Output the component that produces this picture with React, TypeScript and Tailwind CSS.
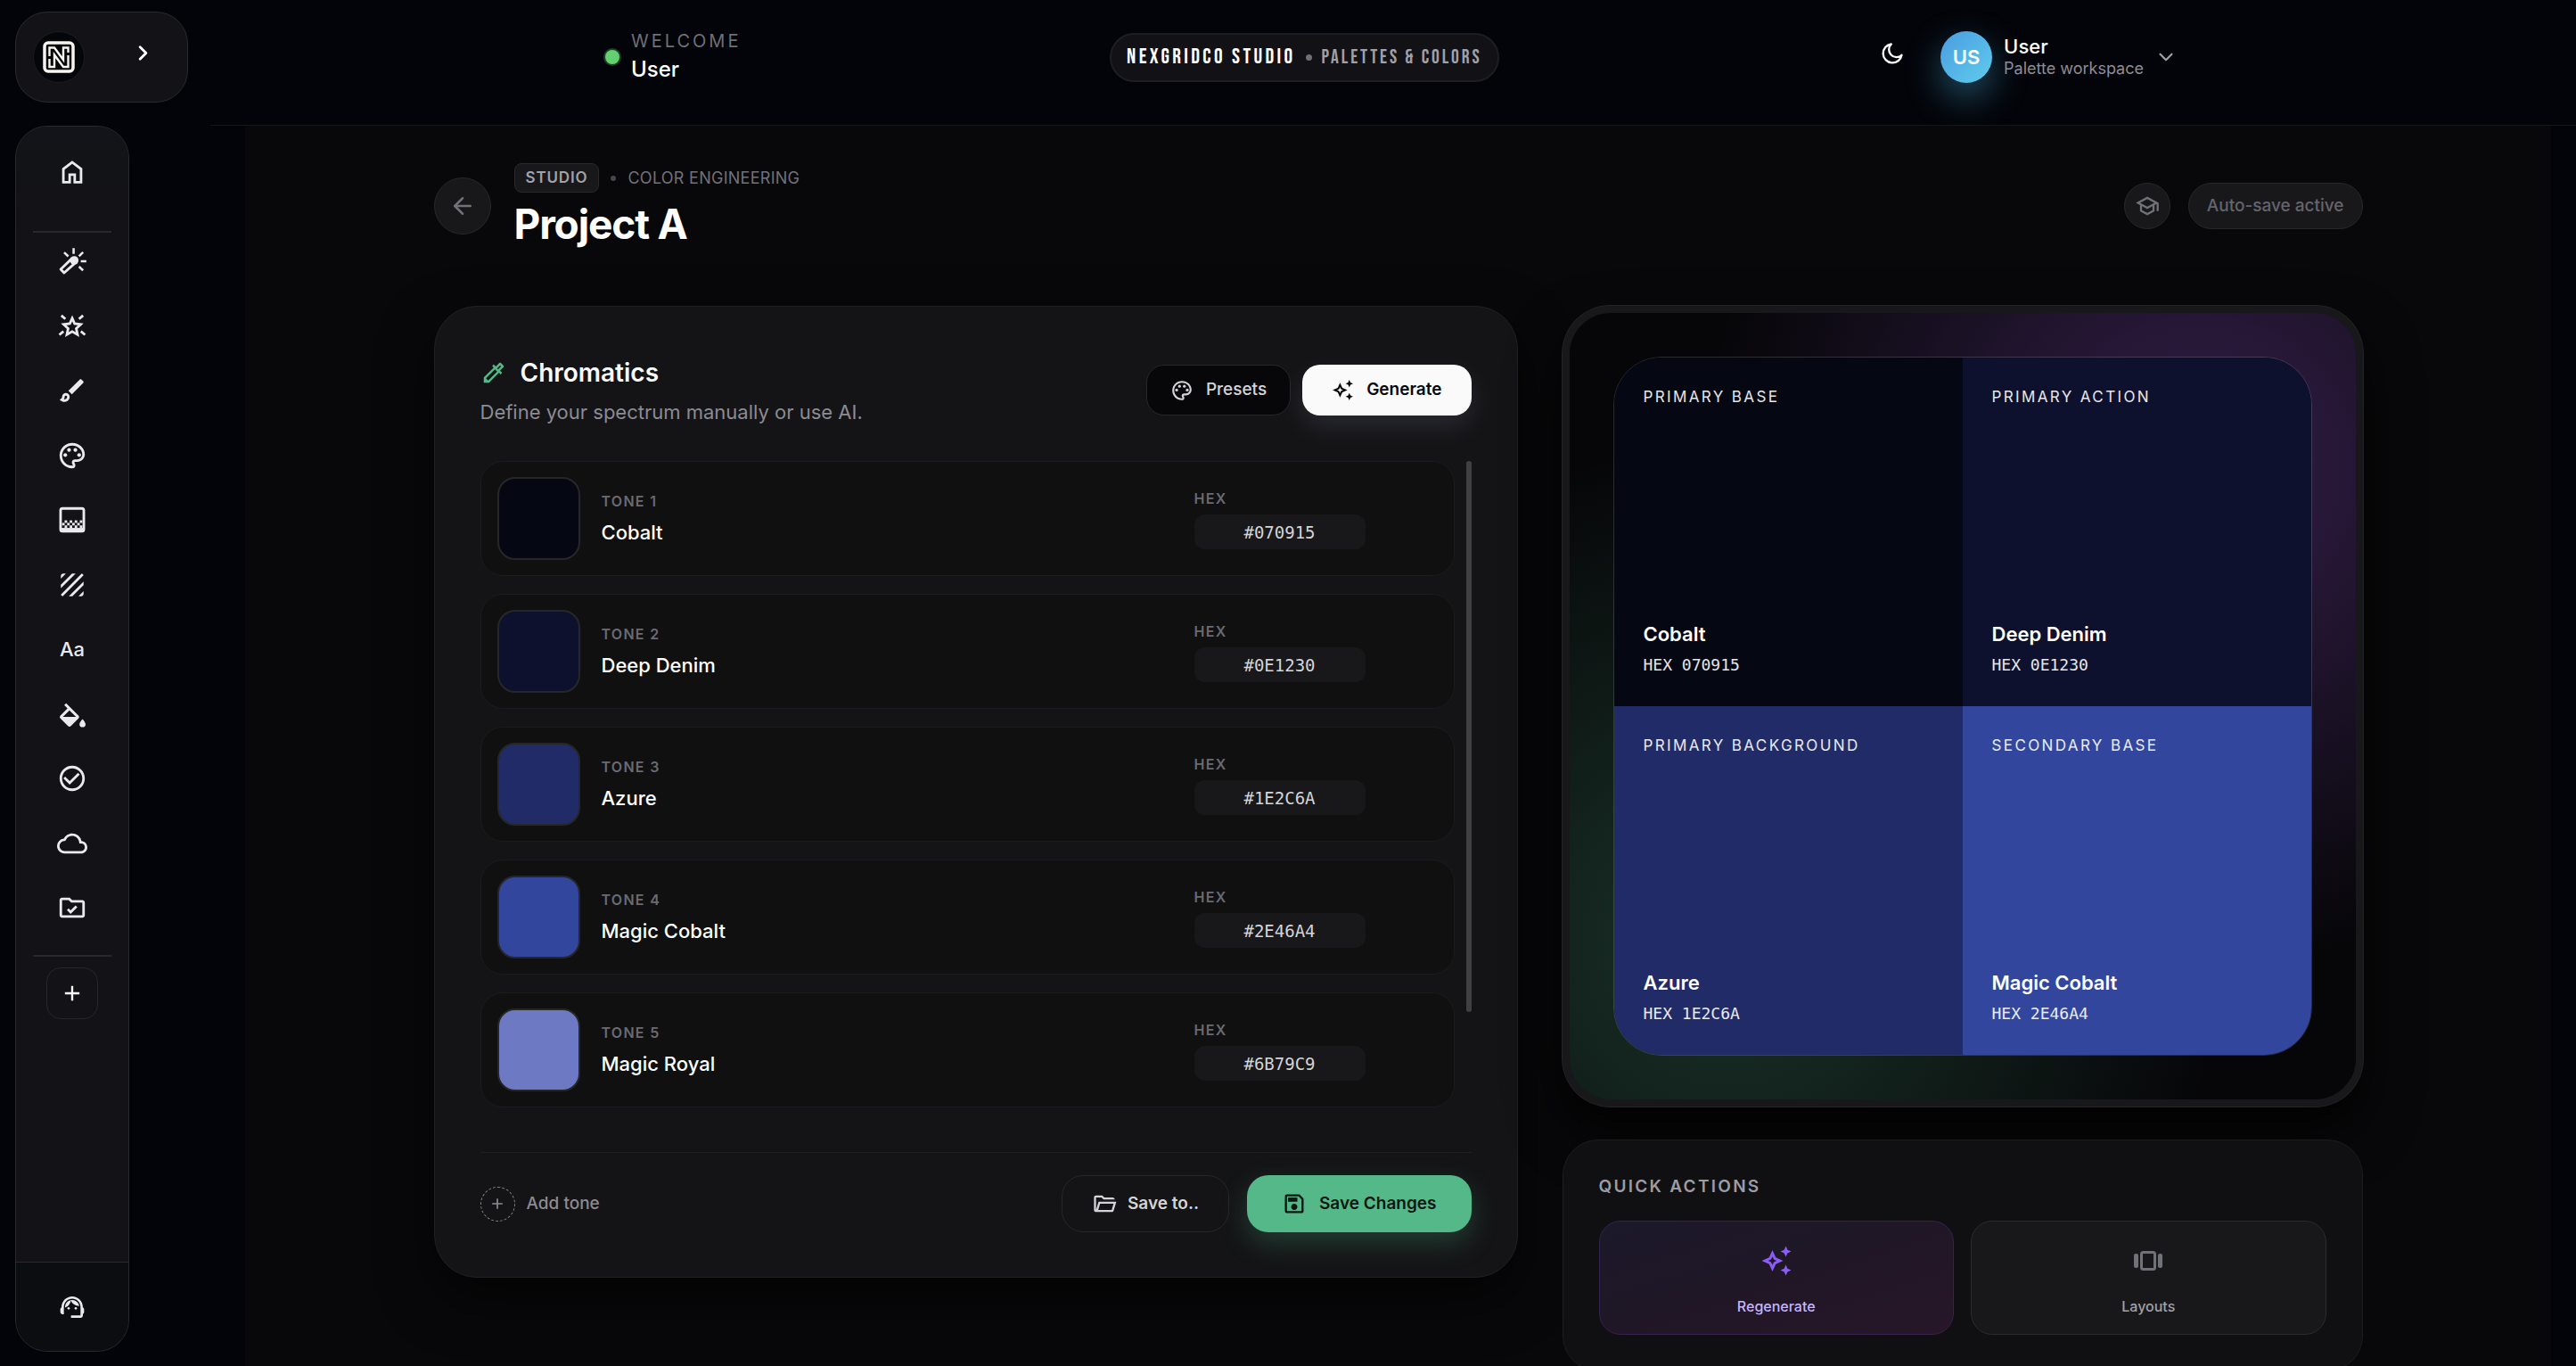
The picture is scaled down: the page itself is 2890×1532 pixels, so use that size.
import React from 'react';
import { ArrowLeft, ChevronDown, ChevronRight } from 'lucide-react';
import {
  MdAdd,
  MdCheckCircleOutline,
  MdOutlineAutoAwesome,
  MdOutlineBrush,
  MdOutlineCloud,
  MdOutlineColorize,
  MdOutlinePalette,
  MdOutlineSave,
  MdOutlineSchool,
  MdOutlineSupportAgent,
  MdTexture,
} from 'react-icons/md';

type Tone = { name: string; hex: string; swatch: string };

const tones: Tone[] = [
  { name: 'Cobalt', hex: '070915', swatch: 'bg-[#050712]' },
  { name: 'Deep Denim', hex: '0E1230', swatch: 'bg-[#0e112d]' },
  { name: 'Azure', hex: '1E2C6A', swatch: 'bg-[#212b67]' },
  { name: 'Magic Cobalt', hex: '2E46A4', swatch: 'bg-[#32469d]' },
  { name: 'Magic Royal', hex: '6B79C9', swatch: 'bg-[#6e79c4]' },
];

const roles = ['Primary Base', 'Primary Action', 'Primary Background', 'Secondary Base'];

const HomeIcon = () => (
  <svg viewBox="0 -960 960 960" fill="currentColor" className="size-[34px]">
    <path d="M240-200h120v-240h240v240h120v-360L480-740 240-560v360Zm-80 80v-480l320-240 320 240v480H520v-240h-80v240H160Z" />
  </svg>
);

const WandIcon = () => (
  <svg viewBox="0 0 24 24" fill="none" stroke="currentColor" strokeWidth="2" className="size-[34px]">
    <path d="M11.8 9.8 2.9 18.3 5.6 21.2 15 12.8" strokeLinejoin="round" />
    <circle cx="13.6" cy="11.3" r="3.4" fill="currentColor" stroke="none" />
    <path d="M13.1 1.6v4.6M18.8 12h4.4M17.4 8 20.6 4.9M5.6 5l3.3 3.1M17.4 16.2l3.2 3" strokeWidth="1.8" />
  </svg>
);

const StarIcon = () => (
  <svg viewBox="0 0 24 24" fill="none" stroke="currentColor" strokeWidth="2" className="size-[34px]">
    <path d="m12 5.6 1.9 4.3 4.8.6-3.5 3.2 1 4.8-4.2-2.4-4.2 2.4 1-4.8-3.5-3.2 4.8-.6z" />
    <path d="M3.4 3.4l3.2 2.8M20.6 3.4l-3.2 2.8M1.8 18.7l3.3-2.7M22.2 18.7l-3.3-2.7" />
  </svg>
);

const GradientIcon = () => (
  <svg viewBox="0 0 24 24" fill="currentColor" className="size-[34px]">
    <rect x="2.8" y="3" width="18.4" height="18" rx="1.5" fill="none" stroke="currentColor" strokeWidth="2" />
    {[0, 1, 2].map((row) =>
      [0, 1, 2, 3].map((col) => (
        <rect key={`${row}-${col}`} x={4 + col * 4 + (row % 2 === 0 ? 2 : 0)} y={12.4 + row * 2} width="2" height="2" />
      ))
    )}
    <path d="M3 18.4h18v2.6H3z" />
  </svg>
);

const FillIcon = () => (
  <svg viewBox="1 -3 22 22" fill="currentColor" className="size-[34px]">
    <path d="M16.56 8.94 7.62 0 6.21 1.41l2.38 2.38-5.15 5.15a1.49 1.49 0 0 0 0 2.12l5.5 5.5c.29.29.68.44 1.06.44s.77-.15 1.06-.44l5.5-5.5c.59-.58.59-1.53 0-2.12zM5.21 10 10 5.21 14.79 10z" />
    <path d="M19.5 11.5s-2.2 2.3-2.2 3.7a2.2 2.2 0 0 0 4.4 0c0-1.4-2.2-3.7-2.2-3.7z" />
  </svg>
);

const FolderCheckIcon = () => (
  <svg viewBox="0 -960 960 960" fill="currentColor" className="size-[34px]">
    <path d="M160-160q-33 0-56.5-23.5T80-240v-480q0-33 23.5-56.5T160-800h240l80 80h320q33 0 56.5 23.5T880-640v400q0 33-23.5 56.5T800-160H160Zm0-80h640v-400H447l-80-80H160v480Z" />
    <path d="m340-430 90 90 185-185" fill="none" stroke="currentColor" strokeWidth="80" />
  </svg>
);

const FolderOpenIcon = () => (
  <svg viewBox="0 -960 960 960" fill="currentColor" className="size-[28px]">
    <path d="M160-160q-33 0-56.5-23.5T80-240v-480q0-33 23.5-56.5T160-800h240l80 80h320q33 0 56.5 23.5T880-640H447l-80-80H160v480l96-320h684L837-217q-8 26-29.5 41.5T760-160H160Zm84-80h516l72-240H316l-72 240Z" />
  </svg>
);

const CarouselIcon = () => (
  <svg viewBox="0 0 36 36" fill="currentColor" className="size-9 text-[#71717a]">
    <rect x="10.5" y="8.5" width="15" height="19" rx="2" fill="none" stroke="currentColor" strokeWidth="3" />
    <rect x="2" y="10" width="5" height="16" rx="2" />
    <rect x="29" y="10" width="5" height="16" rx="2" />
  </svg>
);

const MoonIcon = () => (
  <svg viewBox="0 0 24 24" fill="none" stroke="currentColor" strokeWidth="2" strokeLinejoin="round" className="size-7">
    <path d="M11 3a9 9 0 1 0 10 10.5A6.5 6.5 0 0 1 11 3z" />
  </svg>
);

const LogoMark = () => (
  <svg viewBox="0 0 36 36" fill="none" className="size-9">
    <rect x="2" y="2" width="32" height="32" rx="4" stroke="#f7f5ee" strokeWidth="3.5" />
    <path
      d="M7.5 17V7.5H13L23 21V7.5h5.5V13M28.5 16v13H23L13 15.5V29H7.5v-9"
      stroke="#f7f5ee"
      strokeWidth="2.4"
    />
  </svg>
);

const navItems: { label: string; icon: React.ReactNode }[] = [
  { label: 'Magic', icon: <WandIcon /> },
  { label: 'Logos', icon: <StarIcon /> },
  { label: 'Brush', icon: <MdOutlineBrush size={34} /> },
  { label: 'Palettes', icon: <MdOutlinePalette size={34} /> },
  { label: 'Gradients', icon: <GradientIcon /> },
  { label: 'Textures', icon: <MdTexture size={34} /> },
  { label: 'Typography', icon: <span className="block text-[22px] leading-[34px] font-medium">Aa</span> },
  { label: 'Fill', icon: <FillIcon /> },
  { label: 'Checks', icon: <MdCheckCircleOutline size={34} /> },
  { label: 'Cloud', icon: <MdOutlineCloud size={34} /> },
  { label: 'Projects', icon: <FolderCheckIcon /> },
];

const Sidebar = () => (
  <aside className="flex w-[236px] shrink-0 flex-col items-start gap-[26px] pt-[13px] pb-4 pl-[17px]">
    <div className="flex h-[102px] w-[194px] shrink-0 items-center justify-between rounded-[36px] border border-[#2a2a2e] bg-[#131217] pr-9 pl-[19px]">
      <a href="#" aria-label="Nexgridco" className="flex size-[58px] items-center justify-center rounded-full border border-[#1c1c20] bg-[#04060a]">
        <LogoMark />
      </a>
      <button aria-label="Expand sidebar" className="mb-[10px] text-white">
        <ChevronRight size={27} strokeWidth={2.5} />
      </button>
    </div>

    <div className="flex w-32 flex-1 flex-col overflow-hidden rounded-[36px] border border-[#2a2a2e] bg-[#131217] text-[#e9e9ee]">
      <div className="flex h-[117px] shrink-0 items-start justify-center bg-gradient-to-b from-[#111418] to-[#131217] pt-[34px]">
        <a href="#" aria-label="Home">
          <HomeIcon />
        </a>
      </div>
      <div className="mx-[19px] h-0.5 shrink-0 bg-[#29292d]" />
      <nav className="flex h-[798px] shrink-0 flex-col items-center justify-between pt-[15px] pb-6">
        {navItems.map((item) => (
          <a key={item.label} href="#" aria-label={item.label}>
            {item.icon}
          </a>
        ))}
      </nav>
      <div className="mx-[19px] mt-3 h-0.5 shrink-0 bg-[#29292d]" />
      <button aria-label="Add" className="mt-3 flex size-[58px] shrink-0 items-center justify-center self-center rounded-2xl border border-[#27272b] text-white">
        <MdAdd size={28} />
      </button>
      <div className="mt-auto flex h-[100px] shrink-0 items-center justify-center border-t border-[#2a2a2e] bg-[#0c0d11]">
        <a href="#" aria-label="Support">
          <MdOutlineSupportAgent size={32} />
        </a>
      </div>
    </div>
  </aside>
);

const Header = () => (
  <header className="flex h-[141px] shrink-0 items-start justify-center border-b border-[#151619] pt-[13px] pl-3">
    <div className="flex h-[102px] w-[1840px] items-center justify-between rounded-[40px] pr-[46px] pl-[30px]">
      <div className="flex items-center gap-[13px]">
        <span className="size-4 rounded-full bg-[#64cf72] ring-2 ring-[#1c3f24]" />
        <div>
          <p className="text-[20px] leading-7 tracking-[0.15em] text-[#6f6f76] uppercase">Welcome</p>
          <p className="text-[24px] leading-9 font-medium text-white">User</p>
        </div>
      </div>

      <div className="flex h-[55px] items-center gap-[11px] rounded-full border-2 border-[#1e1e22] bg-[#121116] px-[17px] font-['Bebas_Neue','Roboto_Condensed',Roboto,sans-serif] uppercase">
        <span className="text-[24px] tracking-[0.14em] text-white">Nexgridco Studio</span>
        <span className="size-[7px] rounded-full bg-[#6f6f76]" />
        <span className="text-[22px] tracking-[0.13em] text-[#a0a0a8]">Palettes &amp; Colors</span>
      </div>

      <div className="flex items-center gap-[26px]">
        <button aria-label="Toggle theme" className="mb-2 flex size-14 items-center justify-center text-white">
          <MoonIcon />
        </button>
        <button className="flex items-center text-left">
          <span className="flex size-[58px] items-center justify-center rounded-full bg-gradient-to-br from-[#4c9be0] to-[#5fcdec] text-[22px] font-semibold text-white shadow-[0_16px_40px_rgba(76,175,225,0.45)]">
            US
          </span>
          <span className="ml-[13px] flex flex-col">
            <span className="text-[22px] leading-[26px] font-medium text-white">User</span>
            <span className="text-[18px] leading-6 text-[#8d8d95]">Palette workspace</span>
          </span>
          <ChevronDown size={26} className="ml-3 text-[#a0a0a8]" />
        </button>
      </div>
    </div>
  </header>
);

const PageTitle = () => (
  <div className="flex items-center justify-between">
    <div className="flex items-center gap-[26px]">
      <button aria-label="Back" className="flex size-16 items-center justify-center rounded-full border border-[#28282b] bg-[#18181b] text-[#71717a]">
        <ArrowLeft size={30} />
      </button>
      <div>
        <div className="flex items-center gap-[13px] uppercase">
          <span className="flex h-[33px] items-center rounded-lg border border-[#29292c] bg-[#18181b] px-3 text-[17px] font-semibold tracking-[0.05em] text-[#a1a1aa]">
            Studio
          </span>
          <span className="size-[6px] rounded-full bg-[#46464d]" />
          <span className="text-[18px] tracking-[0.015em] text-[#71717a]">Color Engineering</span>
        </div>
        <h1 className="mt-[7px] text-[46px] leading-[56px] font-bold tracking-tight text-white">Project A</h1>
      </div>
    </div>
    <div className="flex items-center gap-5">
      <button aria-label="Tutorial" className="flex size-[52px] items-center justify-center rounded-full border border-[#28282b] bg-[#18181b] text-[#71717a]">
        <MdOutlineSchool size={28} />
      </button>
      <span className="flex h-[52px] items-center rounded-full border border-[#28282b] bg-[#18181b] px-5 text-[19px] font-medium text-[#64646c]">
        Auto-save active
      </span>
    </div>
  </div>
);

const ToneRow = ({ tone, index }: { tone: Tone; index: number }) => {
  const id = `tone-hex-${index}`;
  return (
    <li className="flex h-[129px] items-center rounded-[25px] border border-[#1c1c1e] bg-[#101010] pr-[99px] pl-[18px]">
      <button aria-label={`Edit ${tone.name}`} className={`size-[93px] rounded-[20px] border-2 border-[#272729] ${tone.swatch}`} />
      <div className="ml-6 flex-1">
        <p className="text-[16px] leading-6 font-semibold tracking-[0.08em] text-[#6a6a73] uppercase">Tone {index + 1}</p>
        <p className="mt-[7px] text-[22px] leading-8 font-medium text-white">{tone.name}</p>
      </div>
      <div className="w-[192px]">
        <label htmlFor={id} className="block text-[16px] leading-6 font-semibold tracking-[0.08em] text-[#6a6a73] uppercase">
          Hex
        </label>
        <input
          id={id}
          defaultValue={`#${tone.hex}`}
          className="mt-[6px] h-[39px] w-full rounded-xl bg-[#18181a] text-center font-['DejaVu_Sans_Mono',monospace] text-[19px] text-[#d4d4d8]"
        />
      </div>
    </li>
  );
};

const Chromatics = () => (
  <section className="self-start rounded-[48px] border border-[#202023] bg-[#141416] px-[51px] pt-[53px] pb-[50px] shadow-[0_24px_60px_rgba(0,0,0,0.6)]">
    <div className="flex items-center justify-between">
      <div>
        <h2 className="flex items-center gap-[15px] text-[28px] leading-[42px] font-semibold text-[#fafafa]">
          <MdOutlineColorize size={30} className="text-[#55b888]" />
          Chromatics
        </h2>
        <p className="mt-2 text-[22px] leading-[31px] text-[#8b8b93]">Define your spectrum manually or use AI.</p>
      </div>
      <div className="flex items-center gap-[13px]">
        <button className="flex h-[57px] items-center gap-[14px] rounded-[20px] border border-[#27272a] bg-[#070709] px-[26px] text-[19px] font-medium text-[#d4d4d8]">
          <MdOutlinePalette size={26} />
          Presets
        </button>
        <button className="flex h-[57px] items-center gap-[14px] rounded-[20px] bg-[#fafafa] px-[33px] text-[19px] font-semibold text-[#09090b] shadow-[0_12px_30px_rgba(200,200,255,0.12)]">
          <MdOutlineAutoAwesome size={25} />
          Generate
        </button>
      </div>
    </div>

    <div className="mt-[39px] flex gap-[13px] pb-[50px]">
      <ul className="flex flex-1 flex-col gap-5">
        {tones.map((tone, i) => (
          <ToneRow key={tone.hex} tone={tone} index={i} />
        ))}
      </ul>
      <div className="h-[618px] w-[6px] rounded-full bg-[#404042]" />
    </div>

    <div className="flex items-center justify-between border-t border-[#1f1f22] pt-[25px]">
      <button className="flex items-center gap-[13px] text-[19px] font-medium text-[#8b8b93]">
        <span className="flex size-[39px] items-center justify-center rounded-full border border-dashed border-[#85858d]">
          <MdAdd size={20} />
        </span>
        Add tone
      </button>
      <div className="flex items-center gap-5">
        <button className="flex h-16 items-center gap-3 rounded-[24px] border border-[#27272a] px-[33px] text-[19px] font-semibold text-[#d4d4d8]">
          <FolderOpenIcon />
          Save to..
        </button>
        <button className="flex h-16 items-center gap-[14px] rounded-[24px] bg-[#55b888] px-[39px] text-[19px] font-semibold text-[#0b1712] shadow-[0_12px_30px_rgba(85,184,136,0.25)]">
          <MdOutlineSave size={28} />
          Save Changes
        </button>
      </div>
    </div>
  </section>
);

const Preview = () => (
  <div className="aspect-square rounded-[54px] border-8 border-[#18181a] bg-[#060608] bg-[radial-gradient(circle_at_80%_20%,rgba(160,90,230,0.29),transparent_56%),radial-gradient(circle_at_20%_80%,rgba(84,182,136,0.25),transparent_56%)] p-[49px] shadow-[0_30px_60px_rgba(0,0,0,0.8)] ring-1 ring-[#232325]">
    <div className="grid h-full grid-cols-2 grid-rows-2 overflow-hidden rounded-[54px] border border-white/15">
      {roles.map((role, i) => (
        <div key={role} className={`flex flex-col justify-between px-[33px] py-8 text-white ${tones[i].swatch}`}>
          <p className="text-[17px] leading-6 tracking-[0.14em] text-white/90 uppercase">{role}</p>
          <div>
            <p className="text-[22px] leading-8 font-semibold">{tones[i].name}</p>
            <p className="mt-[5px] font-['DejaVu_Sans_Mono',monospace] text-[18px] leading-7 text-white/90">HEX {tones[i].hex}</p>
          </div>
        </div>
      ))}
    </div>
  </div>
);

const QuickActions = () => (
  <section className="rounded-[40px] border border-[#1d1d1f] bg-[#101012] p-10">
    <h3 className="text-[19px] leading-6 font-semibold tracking-[0.12em] text-[#9c9ca4] uppercase">Quick Actions</h3>
    <div className="mt-[26px] grid grid-cols-2 gap-[19px]">
      <button className="flex h-32 flex-col items-center justify-between rounded-[24px] border border-[#32234f] bg-gradient-to-br from-[#1b192b] via-[#201726] to-[#271629] pt-[26px] pb-[19px] text-[16px] font-medium text-[#c4b5fd]">
        <MdOutlineAutoAwesome size={36} className="text-[#8b5cf6]" />
        Regenerate
      </button>
      <button className="flex h-32 flex-col items-center justify-between rounded-[24px] border border-[#2b2b2e] bg-[#18181a] pt-[26px] pb-[19px] text-[16px] font-medium text-[#a1a1aa]">
        <CarouselIcon />
        Layouts
      </button>
    </div>
  </section>
);

const App = () => {
  return (
    <div className="flex h-screen overflow-hidden bg-[#030409] font-['Inter',sans-serif]">
      <Sidebar />
      <div className="flex min-w-0 flex-1 flex-col">
        <Header />
        <main className="mr-[28px] ml-[39px] flex-1 overflow-hidden bg-[#08080a] pt-[42px]">
          <div className="mx-auto max-w-[2164px]">
            <PageTitle />
            <div className="mt-16 grid grid-cols-[1216fr_898fr] gap-[50px]">
              <Chromatics />
              <div className="flex flex-col gap-[37px]">
                <Preview />
                <QuickActions />
              </div>
            </div>
          </div>
        </main>
      </div>
    </div>
  );
};

export default App;
